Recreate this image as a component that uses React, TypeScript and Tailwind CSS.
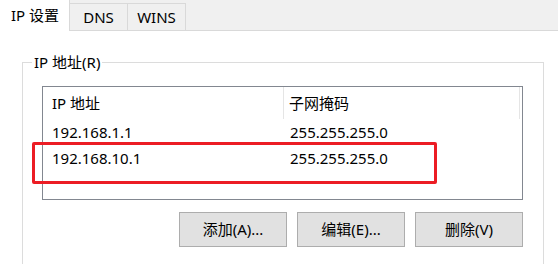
const rows = [
  { ip: '192.168.1.1', mask: '255.255.255.0' },
  { ip: '192.168.10.1', mask: '255.255.255.0' },
];

const tabs = ['IP 设置', 'DNS', 'WINS'];

export default function App() {
  return (
    <div className="w-[558px] h-[264px] overflow-hidden bg-white text-[15px] text-black font-['Noto_Sans','Noto_Sans_CJK_SC',sans-serif]">
      {/* tab strip */}
      <div className="flex items-end h-[31px] bg-[#f0f0f0] border-b border-[#d9d9d9]">
        {tabs.map((t, i) =>
          i === 0 ? (
            <div
              key={t}
              className="relative z-10 -mb-px h-[31px] w-[70px] flex items-center pl-[11px] bg-white border-r border-[#d9d9d9]"
            >
              {t}
            </div>
          ) : (
            <div
              key={t}
              className="h-[27px] w-[58px] flex items-center justify-center bg-[#f0f0f0] border-t border-r border-[#d9d9d9]"
            >
              {t}
            </div>
          )
        )}
      </div>

      {/* group box */}
      <div className="relative mt-[31px] ml-[22px] w-[522px] h-[220px] border border-[#dcdcdc]">
        <span className="absolute left-[9px] -top-[11px] px-[2px] bg-white leading-[20px]">
          IP 地址(R)
        </span>

        <div className="relative mt-[23px] ml-[19px] w-[481px] h-[114px] border border-[#828790]">
          <div className="flex h-[32px] items-center">
            <div className="w-[241px] h-full flex items-center pl-[9px] border-r border-[#e5e5e5]">
              IP 地址
            </div>
            <div className="w-[236px] h-full flex items-center pl-[5px] border-r border-[#e5e5e5]">
              子网掩码
            </div>
          </div>
          {rows.map((r) => (
            <div key={r.ip} className="flex h-[26px] items-center">
              <div className="w-[241px] pl-[9px]">{r.ip}</div>
              <div className="w-[236px] pl-[6px]">{r.mask}</div>
            </div>
          ))}

          {/* highlight */}
          <div className="absolute -left-[11px] top-[55px] w-[405px] h-[42px] border-[3px] border-[#ec1c24] rounded-[2px]" />
        </div>

        <div className="mt-[12px] ml-[19px] w-[481px] flex justify-end gap-[10px]">
          {['添加(A)...', '编辑(E)...', '删除(V)'].map((b) => (
            <button
              key={b}
              className="w-[108px] h-[35px] bg-[#e1e1e1] border border-[#adadad] flex items-center justify-center"
            >
              {b}
            </button>
          ))}
        </div>
      </div>
    </div>
  );
}
